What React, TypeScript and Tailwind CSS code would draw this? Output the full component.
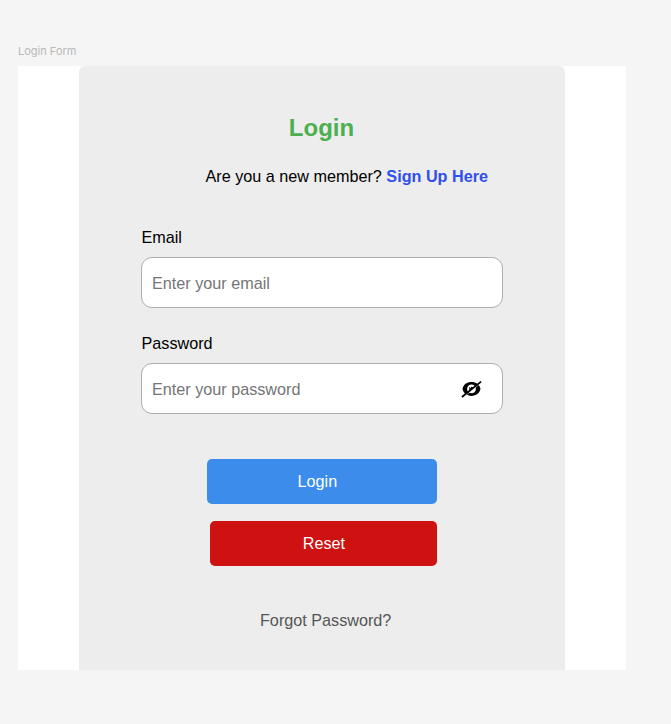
import React from "react";

function EyeOffIcon() {
  return (
    <svg width="22" height="19" viewBox="0 0 22 19" fill="none" aria-hidden="true">
      <path
        fillRule="evenodd"
        fill="#000"
        d="M11.500 2.900C7 2.900 3.300 5.400 2.500 9.800C3.300 14.300 7 16.900 11.500 16.900C16 16.900 19.700 14.300 20.500 9.800C19.700 5.400 16 2.900 11.500 2.900ZM11.500 5.600A4.400 4.300 0 1 1 11.500 14.200A4.400 4.300 0 1 1 11.500 5.600Z"
      />
      <path d="M9.300 7.800V12.300H10.300L13.300 9.900C13.300 8.500 12 7.600 11 7.800L10.800 9.300Z" fill="#000" />
      <path d="M2.700 18.700L21.600 3.400" stroke="#fff" strokeWidth="0.800" />
      <path d="M1.900 18L21.100 2.600" stroke="#000" strokeWidth="1.700" />
    </svg>
  );
}

type FieldProps = {
  label: string;
  placeholder: string;
  type: string;
  icon?: React.ReactNode;
};

function Field({ label, placeholder, type, icon }: FieldProps) {
  return (
    <label className="block">
      <span className="block h-5 pl-[0.500px] leading-5">{label}</span>
      <span className="mt-[10px] flex h-[51px] w-[362px] items-center rounded-[11px] border border-[#aeaeae] bg-white pr-[20px] pl-[10px]">
        <input
          type={type}
          placeholder={placeholder}
          className="min-w-0 flex-1 bg-transparent pt-[1.500px] outline-none placeholder:text-[#757575]"
        />
        {icon}
      </span>
    </label>
  );
}

export default function App() {
  return (
    <div className="h-[724px] w-[671px] overflow-hidden bg-[#f5f5f5] pt-[44px] pl-[18px] font-['Liberation_Sans',Arial,sans-serif] text-[16.200px] text-black">
      <div className="h-[21.500px] font-[Inter,sans-serif] text-[11px] leading-[14px] text-[#b8b8b8]">Login Form</div>
      <main className="h-[604px] w-[608px] bg-white pl-[60.700px]">
        <form className="h-full w-[486.500px] rounded-t-[6px] bg-[#ededed] pt-[47.500px] pl-[62.300px]">
          <h1 className="w-[361px] text-center text-2xl leading-[30px] font-bold text-[#4caf50]">Login</h1>
          <p className="mt-[23px] ml-[64.500px] h-5 leading-5 whitespace-nowrap">
            Are you a new member?{" "}
            <a className="font-bold text-[#304fec]">Sign Up Here</a>
          </p>
          <div className="mt-[41px] flex flex-col gap-[25px]">
            <Field label="Email" placeholder="Enter your email" type="email" />
            <Field label="Password" placeholder="Enter your password" type="password" icon={<EyeOffIcon />} />
          </div>
          <div className="mt-[44.500px] ml-[65.900px] flex w-[230.500px] flex-col items-end gap-[17px] text-white">
            <button type="button" className="h-[45px] w-[230px] rounded-[5px] bg-[#3b8ceb] pr-[10px]">
              Login
            </button>
            <button type="reset" className="h-[45px] w-[227px] rounded-[5px] bg-[#ce1111]">
              Reset
            </button>
          </div>
          <a className="mt-[44.500px] ml-[119px] block leading-5 text-[#555]">Forgot Password?</a>
        </form>
      </main>
    </div>
  );
}
